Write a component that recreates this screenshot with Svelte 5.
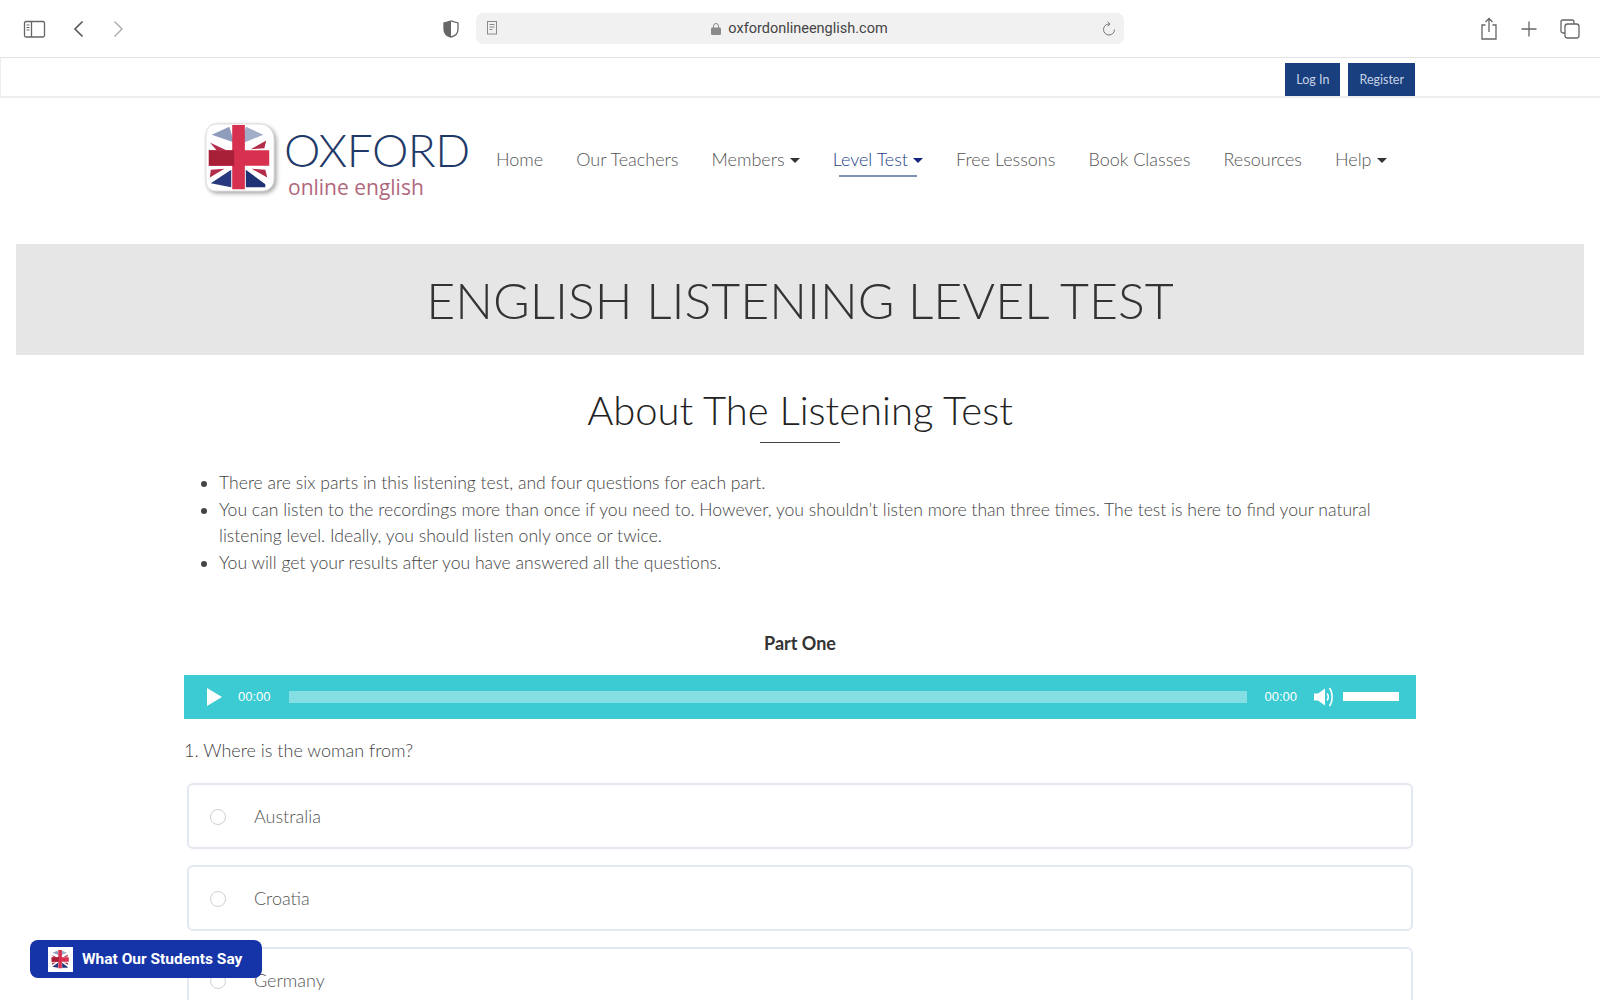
<script>
  const nav = [
    { label: "Home" },
    { label: "Our Teachers" },
    { label: "Members", caret: true },
    { label: "Level Test", caret: true, active: true },
    { label: "Free Lessons" },
    { label: "Book Classes" },
    { label: "Resources" },
    { label: "Help", caret: true }
  ];
  const notes = [
    "There are six parts in this listening test, and four questions for each part.",
    "You can listen to the recordings more than once if you need to. However, you shouldn’t listen more than three times. The test is here to find your natural listening level. Ideally, you should listen only once or twice.",
    "You will get your results after you have answered all the questions."
  ];
  const options = ["Australia", "Croatia", "Germany"];
</script>

{#snippet flag()}
  <svg viewBox="0 0 76 76" class="flag" aria-hidden="true">
    <defs>
      <clipPath id="flag-clip"><path d="M14 3h44c9 0 15 7 15 16v40c0 8-5 13-13 13H13C6 72 3 67 3 60V16C3 8 7 3 14 3z" /></clipPath>
    </defs>
    <path d="M14 3h44c9 0 15 7 15 16v40c0 8-5 13-13 13H13C6 72 3 67 3 60V16C3 8 7 3 14 3z" fill="#fff" stroke="#d9d9d9" />
    <g clip-path="url(#flag-clip)">
      <path d="M9 14 27 6l5 16z" fill="#8f9cbc" />
      <path d="M44 6l18 8-22 9z" fill="#a2adc7" />
      <path d="M8 64l21-14v18z" fill="#28397f" />
      <path d="M44 50l20 15v3H44z" fill="#1f3276" />
      <path d="M7 22l17 8H14zM65 20l-16 9 14-1zM8 50l14-1-15 9zM66 58 50 49l14 1z" fill="#b32d4a" />
      <path d="M30 4h13v66H30z" fill="#d8304f" />
      <path d="M6 30h62v16H6z" fill="#d8304f" />
      <path d="M6 30h26v16H6z" fill="#a81f38" />
    </g>
  </svg>
{/snippet}

<div class="page">
  <header class="browser">
    <div class="browser-left">
      <svg width="24" height="18" viewBox="0 0 24 18" fill="none" stroke="#666" stroke-width="1.3">
        <rect x="1.5" y="1.5" width="20" height="15.5" rx="1.5" />
        <path d="M8.5 1.5v15.5" />
        <path d="M3.5 5h3M3.5 7.5h3M3.5 10h3" stroke-width="1" />
      </svg>
      <svg class="back" width="12" height="18" viewBox="0 0 12 18" fill="none" stroke="#555" stroke-width="1.6"><path d="M9.5 1.5 2 9l7.500 7.500" /></svg>
      <svg class="forward" width="12" height="18" viewBox="0 0 12 18" fill="none" stroke="#aaa" stroke-width="1.4"><path d="M2.500 1.500 10 9l-7.500 7.500" /></svg>
    </div>
    <div class="browser-mid">
      <svg width="16" height="18" viewBox="0 0 16 18">
        <path d="M8 1 1 3v6c0 4 3 7 7 8 4-1 7-4 7-8V3z" fill="#fff" stroke="#666" stroke-width="1.300" />
        <path d="M8 1 1 3v6c0 4 3 7 7 8z" fill="#666" />
      </svg>
      <div class="url">
        <svg class="reader" width="10" height="14" viewBox="0 0 10 14" fill="none" stroke="#8a8a8a"><rect x=".5" y=".5" width="9" height="12.500" /><path d="M2.500 3.500h5M2.500 6h5M2.500 8.500h3" /></svg>
        <span class="host">
          <svg width="10" height="13" viewBox="0 0 10 13"><path d="M2.500 6V4a2.500 2.500 0 0 1 5 0v2" fill="none" stroke="#8a8a8a" /><rect y="5.500" width="10" height="7.500" rx="1.200" fill="#8a8a8a" /></svg>
          oxfordonlineenglish.com
        </span>
        <svg class="reload" width="14" height="16" viewBox="0 0 14 16" fill="none" stroke="#777"><path d="M7 3a5.500 5.500 0 1 0 5.500 5.500" /><path d="M5.500.800 8 3 5.800 5.400" /></svg>
      </div>
    </div>
    <div class="browser-right">
      <svg width="18" height="24" viewBox="0 0 18 24" fill="none" stroke="#666" stroke-width="1.300"><path d="M5.500 8H2v14h14V8h-3.500M9 15V2M5.500 5 9 1.500 12.500 5" /></svg>
      <svg width="16" height="16" viewBox="0 0 16 16" fill="none" stroke="#666" stroke-width="1.300"><path d="M8 .5v15M.5 8h15" /></svg>
      <svg width="20" height="20" viewBox="0 0 20 20" fill="none" stroke="#666" stroke-width="1.300"><path d="M5 14H3a2 2 0 0 1-2-2V3a2 2 0 0 1 2-2h9a2 2 0 0 1 2 2v2" /><rect x="5" y="5" width="14" height="14" rx="2.500" /></svg>
    </div>
  </header>

  <div class="topbar">
    <div class="topbar-in">
      <a href="#login">Log In</a>
      <a href="#register">Register</a>
    </div>
  </div>

  <div class="masthead">
    <div class="logo">
      {@render flag()}
      <div class="wordmark">
        <span class="oxford">OXFORD</span>
        <span class="online">online english</span>
      </div>
    </div>
    <nav>
      {#each nav as item}
        <a href="#nav" class:active={item.active} class:caret={item.caret}>{item.label}</a>
      {/each}
    </nav>
  </div>

  <div class="hero"><h1>ENGLISH LISTENING LEVEL TEST</h1></div>

  <main>
    <h2>About The Listening Test</h2>
    <div class="rule"></div>
    <ul>
      {#each notes as note}
        <li>{note}</li>
      {/each}
    </ul>

    <h3>Part One</h3>
    <div class="player">
      <svg width="16" height="18" viewBox="0 0 16 18"><path d="M1 0l15 9-15 9z" fill="#fff" /></svg>
      <span class="time first">00:00</span>
      <div class="track"></div>
      <span class="time">00:00</span>
      <svg class="speaker" width="21" height="20" viewBox="0 0 21 20">
        <path d="M0 6.500h4L11 1.500v17L4 13.500H0z" fill="#fff" />
        <path d="M13 6.500c1.500 2 1.500 5 0 7M15.500 1c3.500 4.500 3.500 13.500 0 18" fill="none" stroke="#fff" stroke-width="1.500" />
      </svg>
      <div class="volume"></div>
    </div>

    <p class="question">1. Where is the woman from?</p>
    {#each options as option}
      <label class="option">
        <span class="radio"></span>
        <span>{option}</span>
      </label>
    {/each}
  </main>

  <button class="students" type="button">
    <span class="mini">{@render flag()}</span>
    What Our Students Say
  </button>
</div>

<style>
  :global(body) {
    margin: 0;
    background: #fff;
  }
  .page {
    position: relative;
    height: 1000px;
    overflow: hidden;
    font-family: Lato, "Open Sans", sans-serif;
    font-weight: 300;
    color: #444;
  }
  .browser {
    display: grid;
    grid-template-columns: 1fr auto 1fr;
    align-items: center;
    height: 57px;
    border-bottom: 1px solid #e4e4e4;
  }
  .browser-left {
    display: flex;
    align-items: center;
    padding-left: 23px;
  }
  .back { margin-left: 26px; }
  .forward { margin-left: 27px; }
  .browser-mid {
    display: flex;
    align-items: center;
    gap: 17px;
    margin-right: 0;
    transform: translateX(-17px);
  }
  .url {
    position: relative;
    display: flex;
    align-items: center;
    justify-content: center;
    width: 648px;
    height: 31px;
    border-radius: 7px;
    background: #f1f1f1;
  }
  .reader {
    position: absolute;
    left: 11px;
    top: 8px;
  }
  .reload {
    position: absolute;
    right: 8px;
    top: 8px;
  }
  .host {
    display: flex;
    align-items: center;
    gap: 7px;
    font-family: Roboto, sans-serif;
    font-weight: 400;
    font-size: 14.500px;
    color: #444;
  }
  .browser-right {
    display: flex;
    align-items: center;
    justify-content: flex-end;
    gap: 23px;
    padding-right: 20px;
  }
  .topbar {
    height: 38px;
    border-bottom: 2px solid #eee;
    border-left: 1px solid #eee;
  }
  .topbar-in {
    display: flex;
    justify-content: flex-end;
    gap: 8px;
    width: 1414px;
    padding-top: 5px;
  }
  .topbar-in a {
    display: flex;
    align-items: center;
    height: 33px;
    padding: 0 11px;
    background: #1a3f7e;
    color: #c6d3e6;
    font-size: 12.500px;
    font-weight: 400;
    text-decoration: none;
    box-sizing: border-box;
  }
  .masthead {
    display: flex;
    align-items: flex-start;
    padding-left: 203px;
    height: 146px;
  }
  .logo {
    display: flex;
    align-items: flex-start;
    width: 293px;
    padding-top: 23px;
  }
  .logo .flag {
    width: 74px;
    height: 74px;
    filter: drop-shadow(2px 2px 2px rgb(0 0 0 / 0.35));
  }
  .wordmark {
    display: flex;
    flex-direction: column;
    margin-left: 7px;
  }
  .oxford {
    font-size: 46px;
    line-height: 48px;
    color: #1f3a68;
    letter-spacing: -0.5px;
    margin-top: 5px;
  }
  .online {
    font-size: 24px;
    line-height: 26px;
    color: #b0687c;
    font-weight: 400;
    margin-left: 4px;
    font-family: "Open Sans", sans-serif;
    font-size: 21px;
  }
  nav {
    display: flex;
    gap: 33px;
    padding-top: 49px;
    font-size: 18px;
    line-height: 24px;
  }
  nav a {
    position: relative;
    color: #555;
    text-decoration: none;
  }
  nav a.caret::after {
    content: "";
    display: inline-block;
    margin-left: 5px;
    vertical-align: 3px;
    border-top: 5px solid #333;
    border-left: 5px solid transparent;
    border-right: 5px solid transparent;
  }
  nav a.active { color: #1e3f86; }
  nav a.active::after { border-top-color: #14237c; }
  nav a.active::before {
    content: "";
    position: absolute;
    left: 6px;
    right: 6px;
    bottom: -6px;
    height: 2px;
    background: #7f92b5;
  }
  .hero {
    margin: 0 16px;
    height: 111px;
    display: flex;
    align-items: center;
    justify-content: center;
    background: #e6e6e6;
  }
  h1 {
    margin: 0;
    font-size: 50px;
    font-weight: 300;
    color: #333;
  }
  main {
    width: 1232px;
    margin: 0 auto;
  }
  h2 {
    margin: 28px 0 0;
    font-size: 40px;
    line-height: 54px;
    font-weight: 300;
    text-align: center;
    color: #222;
  }
  .rule {
    width: 80px;
    height: 1px;
    margin: 5px auto 0;
    background: #444;
  }
  ul {
    margin: 27px 0 0;
    padding: 0 0 0 35px;
    font-size: 17.600px;
    line-height: 26.700px;
  }
  h3 {
    margin: 53px 0 0;
    font-size: 18px;
    line-height: 26px;
    font-weight: 700;
    text-align: center;
    color: #333;
  }
  .player {
    display: flex;
    align-items: center;
    height: 44px;
    margin-top: 19px;
    padding: 0 17px 0 22px;
    background: #3ccbd2;
    color: #fff;
  }
  .time {
    font-family: "Liberation Sans", Arial, sans-serif;
    font-weight: 400;
    font-size: 13px;
    margin: 0 17px;
  }
  .first {
    margin-left: 16px;
    margin-right: 18px;
  }
  .track {
    flex: 1;
    height: 12px;
    background: #85dfe2;
  }
  .speaker { margin-right: 8px; }
  .volume {
    width: 56px;
    height: 9px;
    margin-left: 0;
    background: #fff;
  }
  .question {
    margin: 18px 0 0;
    font-size: 18px;
    line-height: 26px;
  }
  .option {
    display: flex;
    align-items: center;
    gap: 28px;
    height: 62px;
    margin: 20px 3px -4px;
    padding-left: 21px;
    border: 2px solid #e4e8f1;
    border-radius: 6px;
    font-size: 18px;
    color: #555;
  }
  .option + .option { margin-top: 20px; }
  .radio {
    width: 14px;
    height: 14px;
    border: 1px solid #d0d0d0;
    border-radius: 50%;
    margin-top: 2px;
  }
  .students {
    position: absolute;
    left: 30px;
    top: 940px;
    display: flex;
    align-items: center;
    gap: 9px;
    width: 232px;
    height: 38px;
    padding: 0 18px;
    border: 0;
    border-radius: 8px;
    background: #1434a8;
    color: #fff;
    font-family: Roboto, sans-serif;
    font-weight: 700;
    font-size: 15.500px;
    white-space: nowrap;
  }
  .mini {
    display: flex;
    width: 25px;
    height: 25px;
    background: #fff;
    align-items: center;
    justify-content: center;
  }
  .mini .flag {
    width: 21px;
    height: 21px;
  }
</style>
